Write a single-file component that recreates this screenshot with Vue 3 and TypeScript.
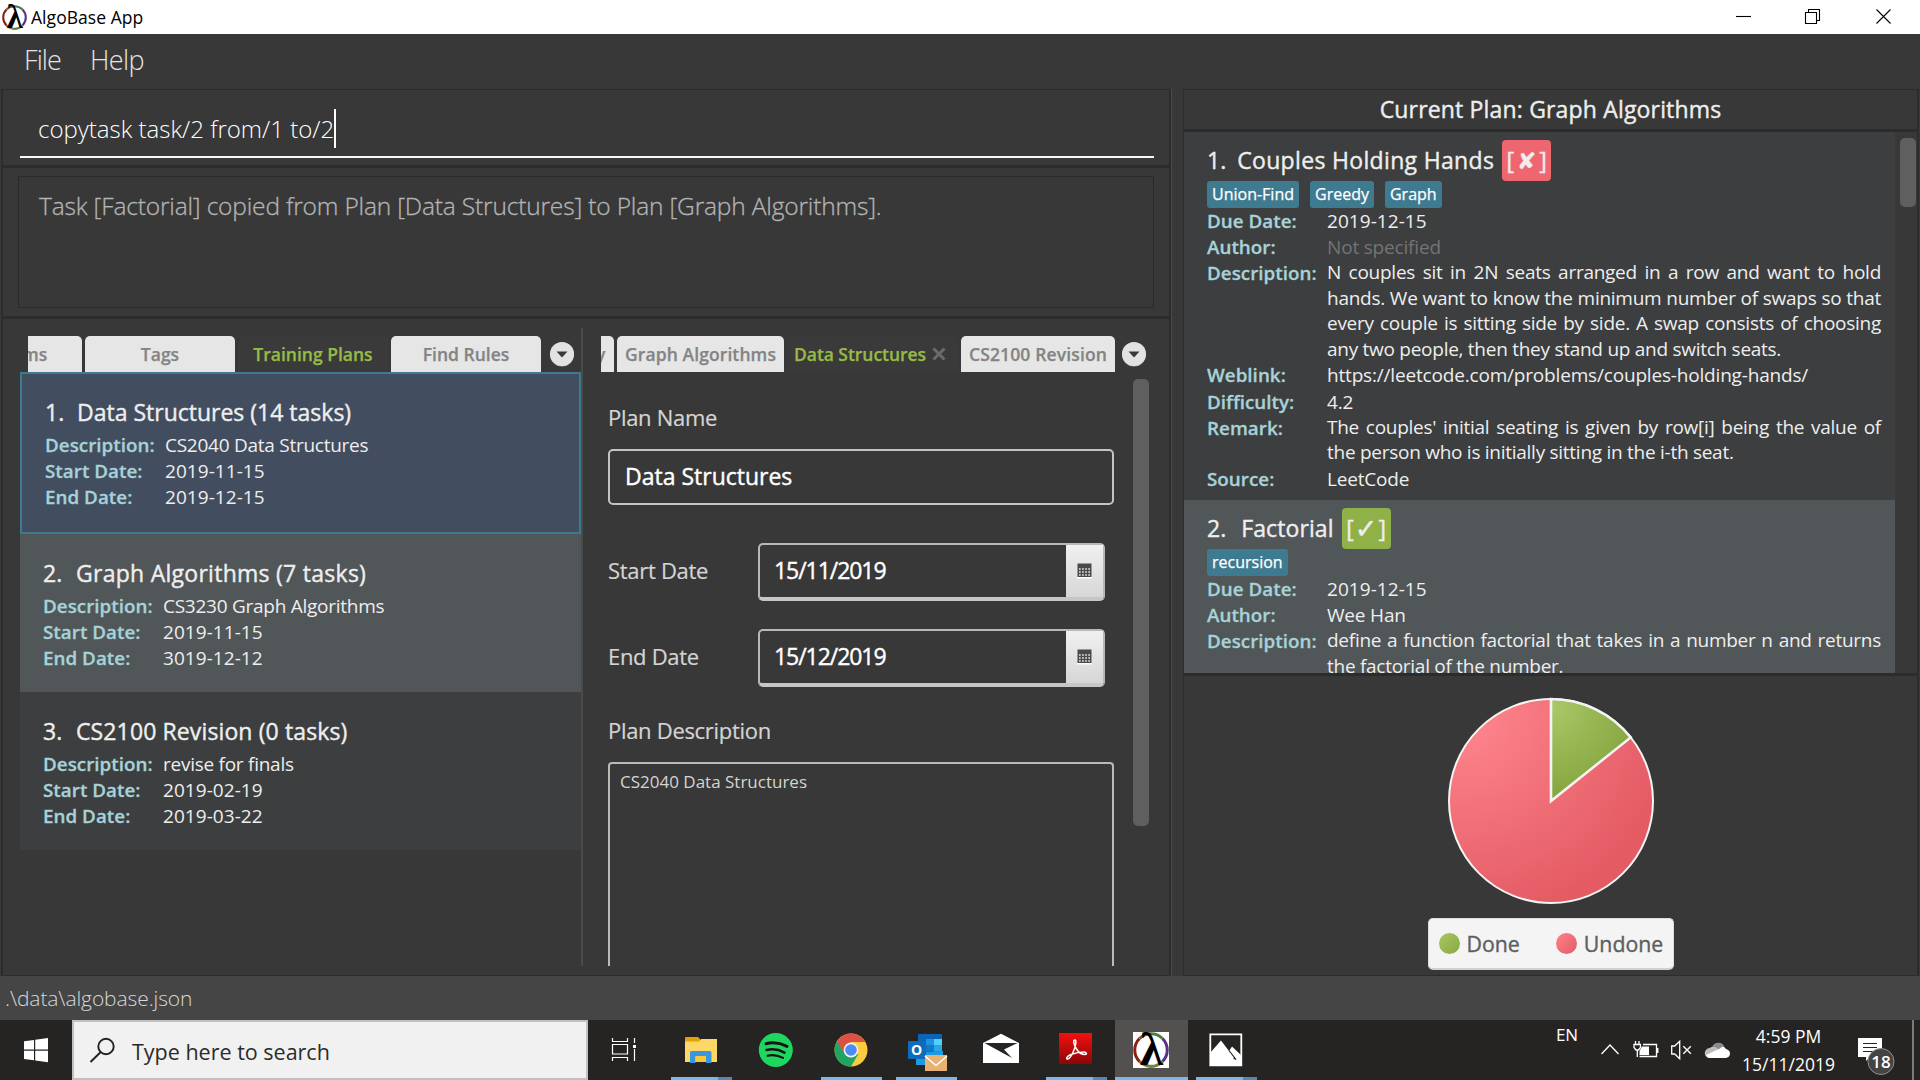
<script setup lang="ts">
interface Plan { index: number; title: string; tracking: number; description: string; start: string; end: string; selected?: boolean }
interface Field { label: string; value: string; kind?: 'muted' | 'block' | 'date' }
interface Task { index: number; title: string; tracking: number; gap: number; done: boolean; tags: string[]; fields: Field[] }

const plans: Plan[] = [
  { index: 1, title: 'Data Structures (14 tasks)', tracking: 0, description: 'CS2040 Data Structures', start: '2019-11-15', end: '2019-12-15', selected: true },
  { index: 2, title: 'Graph Algorithms (7 tasks)', tracking: 0.27, description: 'CS3230 Graph Algorithms', start: '2019-11-15', end: '3019-12-12' },
  { index: 3, title: 'CS2100 Revision (0 tasks)', tracking: 0.12, description: 'revise for finals', start: '2019-02-19', end: '2019-03-22' },
]

const tasks: Task[] = [
  {
    index: 1, title: 'Couples Holding Hands', tracking: 0.33, gap: 11, done: false, tags: ['Union-Find', 'Greedy', 'Graph'],
    fields: [
      { label: 'Due Date:', value: '2019-12-15', kind: 'date' },
      { label: 'Author:', value: 'Not specified', kind: 'muted' },
      { label: 'Description:', value: 'N couples sit in 2N seats arranged in a row and want to hold hands. We want to know the minimum number of swaps so that every couple is sitting side by side. A swap consists of choosing any two people, then they stand up and switch seats.', kind: 'block' },
      { label: 'Weblink:', value: 'https://leetcode.com/problems/couples-holding-hands/' },
      { label: 'Difficulty:', value: '4.2' },
      { label: 'Remark:', value: "The couples' initial seating is given by row[i] being the value of the person who is initially sitting in the i-th seat.", kind: 'block' },
      { label: 'Source:', value: 'LeetCode' },
    ],
  },
  {
    index: 2, title: 'Factorial', tracking: 0.1, gap: 15, done: true, tags: ['recursion'],
    fields: [
      { label: 'Due Date:', value: '2019-12-15', kind: 'date' },
      { label: 'Author:', value: 'Wee Han' },
      { label: 'Description:', value: 'define a function factorial that takes in a number n and returns the factorial of the number.', kind: 'block' },
    ],
  },
]
</script>

<template>
  <div class="screen">
    <svg class="defs" width="0" height="0">
      <symbol id="logo" viewBox="0 0 36 36" overflow="visible">
        <circle cx="18" cy="18" r="16.2" fill="#fff" />
        <g fill="none" stroke-width="3">
          <path d="M6.5 6.5A16.3 16.3 0 0 0 6.5 29.5" stroke="#8b2014" />
          <path d="M29.5 6.5A16.3 16.3 0 0 1 29.5 29.5" stroke="#573382" />
          <path d="M6.5 6.5A16.3 16.3 0 0 1 18 1.8" stroke="#6d5a3c" />
          <path d="M18 1.8A16.3 16.3 0 0 1 29.5 6.5" stroke="#527a45" />
          <path d="M6.5 29.5A16.3 16.3 0 0 0 14 33.8" stroke="#8a5d28" />
          <path d="M14 33.8A16.3 16.3 0 0 0 29.5 29.5" stroke="#64893a" />
        </g>
        <text class="lambda" x="18.5" y="33" text-anchor="middle">λ</text>
      </symbol>
    </svg>

    <header class="titlebar">
      <svg class="title-logo" width="25" height="25"><use href="#logo" /></svg>
      <span class="title-text">AlgoBase App</span>
      <svg class="win-buttons" width="180" height="34" viewBox="1730 0 180 34" fill="none" stroke="#000" stroke-width="1.1">
        <path d="M1736 16.5h15" />
        <path d="M1805.5 12.5h11v11h-11zM1808.5 12v-2.5h11v11h-2.500" />
        <path d="M1876.500 9.500l14 14M1890.500 9.500l-14 14" />
      </svg>
    </header>

    <nav class="menubar"><span class="m-file">File</span><span class="m-help">Help</span></nav>

    <main class="main">
      <section class="left">
        <div class="command">
          <div class="command-input"><span>copytask task/2 from/1 to/2</span><i class="caret"></i></div>
        </div>
        <div class="result">
          <div class="result-box">Task [Factorial] copied from Plan [Data Structures] to Plan [Graph Algorithms].</div>
        </div>
        <div class="workspace">
          <div class="list-col">
            <div class="tabs list-tabs">
              <div class="tab cut cut-ms"><span>ms</span></div>
              <div class="tab wide">Tags</div>
              <div class="tab wide active">Training Plans</div>
              <div class="tab wide find">Find Rules</div>
              <svg class="drop" width="26" height="26" viewBox="0 0 26 26"><circle cx="13" cy="13.500" r="12" fill="#a8a8a8" /><circle cx="13" cy="13" r="12" fill="#e2e2e2" /><path d="M7.500 10.500h11l-5.500 6z" fill="#383838" /></svg>
            </div>
            <article v-for="p in plans" :key="p.index" class="plan" :class="{ selected: p.selected, even: p.index === 2 }">
              <h3><span class="num">{{ p.index }}.</span><span :style="{ letterSpacing: p.tracking + 'px' }">{{ p.title }}</span></h3>
              <div class="prow"><b>Description:</b><span>{{ p.description }}</span></div>
              <div class="prow"><b>Start Date:</b><span class="date">{{ p.start }}</span></div>
              <div class="prow"><b>End Date:</b><span class="date">{{ p.end }}</span></div>
            </article>
          </div>

          <div class="detail-col">
            <div class="tabs detail-tabs">
              <div class="tab cut cut-y"><span>y</span></div>
              <div class="tab t-graph">Graph Algorithms</div>
              <div class="tab active t-data">Data Structures
                <svg width="14" height="14" viewBox="0 0 14 14"><path d="M1.500 1.500l11 11M12.500 1.500l-11 11" stroke="#6b6b6b" stroke-width="3" /></svg>
              </div>
              <div class="tab t-rev">CS2100 Revision</div>
              <svg class="drop" width="26" height="26" viewBox="0 0 26 26"><circle cx="13" cy="13.500" r="12" fill="#a8a8a8" /><circle cx="13" cy="13" r="12" fill="#e2e2e2" /><path d="M7.500 10.500h11l-5.500 6z" fill="#383838" /></svg>
            </div>
            <div class="detail-body">
              <form class="form">
                <label class="lbl">Plan Name</label>
                <div class="field">Data Structures</div>
                <div class="date-row">
                  <label class="lbl">Start Date</label>
                  <div class="datebox">
                    <span>15/11/2019</span>
                    <i class="cal"><svg width="15" height="16" viewBox="0 0 15 16"><path d="M0 14h15v1.500H0z" fill="#fff" /><path d="M.5.5h14v13.500H.5z" fill="#4a4a4a" /><path d="M2 6h11M2 9h11M2 12h11" stroke="#e8e8e8" stroke-width="1.400" stroke-dasharray="1.700 1.400" /></svg></i>
                  </div>
                </div>
                <div class="date-row second">
                  <label class="lbl">End Date</label>
                  <div class="datebox">
                    <span>15/12/2019</span>
                    <i class="cal"><svg width="15" height="16" viewBox="0 0 15 16"><path d="M0 14h15v1.500H0z" fill="#fff" /><path d="M.5.5h14v13.500H.5z" fill="#4a4a4a" /><path d="M2 6h11M2 9h11M2 12h11" stroke="#e8e8e8" stroke-width="1.400" stroke-dasharray="1.700 1.400" /></svg></i>
                  </div>
                </div>
                <label class="lbl desc-lbl">Plan Description</label>
                <div class="area">CS2040 Data Structures</div>
              </form>
              <div class="scroll-thumb"></div>
            </div>
          </div>
        </div>
      </section>

      <section class="right">
        <h2 class="current">Current Plan: Graph Algorithms</h2>
        <div class="tasks">
          <div class="task-list">
            <article v-for="t in tasks" :key="t.index" class="task" :class="{ even: t.index === 2 }">
              <h3><span :style="{ marginRight: t.gap + 'px' }">{{ t.index }}.</span><span :style="{ letterSpacing: t.tracking + 'px' }">{{ t.title }}</span><span class="badge" :class="t.done ? 'done' : 'undone'">[<i>{{ t.done ? '✓' : '✘' }}</i>]</span></h3>
              <div class="tags"><span v-for="g in t.tags" :key="g">{{ g }}</span></div>
              <div v-for="f in t.fields" :key="f.label" class="trow" :class="f.kind"><b>{{ f.label }}</b><span>{{ f.value }}</span></div>
            </article>
          </div>
          <div class="task-scroll"><div class="task-thumb"></div></div>
        </div>
        <div class="chart">
          <svg class="pie" width="208" height="208" viewBox="-104 -104 208 208">
            <defs>
              <radialGradient id="pr" gradientUnits="userSpaceOnUse" cx="-85" cy="-85" r="205"><stop offset="0" stop-color="#ff868e" /><stop offset="1" stop-color="#e45b64" /></radialGradient>
              <radialGradient id="pg" gradientUnits="userSpaceOnUse" cx="0" cy="-95" r="85"><stop offset="0" stop-color="#aac868" /><stop offset="1" stop-color="#87a841" /></radialGradient>
            </defs>
            <circle r="102" fill="url(#pr)" stroke="#f4f4f4" stroke-width="2" />
            <path d="M0 0V-102A102 102 0 0 1 79.700 -63.600Z" fill="url(#pg)" stroke="#f4f4f4" stroke-width="2.600" stroke-linejoin="miter" />
          </svg>
          <div class="legend"><i class="dot g"></i><span>Done</span><i class="dot r"></i><span>Undone</span></div>
        </div>
      </section>
    </main>

    <footer class="status">.\data\algobase.json</footer>

    <div class="taskbar">
      <svg class="start" width="72" height="60" viewBox="0 1020 72 60" fill="#fff"><path d="M24 1041.300l10-1.400v9.600H24zM35.200 1039.700l12.800-1.800v11.600H35.200zM24 1050.700h10v9.600l-10-1.400zM35.200 1050.700H48v11.600l-12.800-1.800z" /></svg>
      <div class="search">
        <svg width="28" height="28" viewBox="88 1036 28 28" fill="none" stroke="#222" stroke-width="1.900"><circle cx="106" cy="1046.500" r="7.700" /><path d="M100.500 1052.200L90.500 1062" /></svg>
        <span>Type here to search</span>
      </div>
      <svg class="task-view" width="76" height="60" viewBox="588 1020 76 60" fill="none" stroke="#fff" stroke-width="1.200"><path d="M612.500 1038v3.500h15V1038M612.500 1044.500h15v9.500h-15zM612.500 1061v-3.500h15v3.500M634.500 1038v5M634.500 1049v12" /><path d="M633 1045h3v3h-3z" fill="#fff" stroke="none" /></svg>
      <svg class="app" width="75" height="60" viewBox="664 1020 75 60">
        <path d="M685 1038q0-1 1-1h12l2 2v4h-15z" fill="#e2a105" /><path d="M685 1041.500h14l2-2.500h16v23h-32z" fill="#ffd766" /><path d="M690 1063v-10.500q0-1.500 1.500-1.500h18.500q1.500 0 1.500 1.500V1063h-5.500v-7h-10.500v7z" fill="#3b97dd" /><path d="M695.500 1056h10.500v6h-10.500z" fill="#fbc63a" />
        <path d="M671 1077h47v3h-47z" fill="#76b9ed" /><path d="M718 1077h14v3h-14z" fill="#5988ae" />
      </svg>
      <svg class="app" width="75" height="60" viewBox="739 1020 75 60"><circle cx="775.800" cy="1050" r="17" fill="#1ed760" /><g fill="none" stroke="#191414" stroke-linecap="round"><path d="M766 1043.800q10.500-2.800 21 2.600" stroke-width="3" /><path d="M766.500 1050q9.500-2.200 18 2.600" stroke-width="2.500" /><path d="M767.500 1055.700q8-1.800 15.500 2.200" stroke-width="2.100" /></g></svg>
      <svg class="app" width="75" height="60" viewBox="814 1020 75 60">
        <circle cx="851" cy="1050" r="16.500" fill="#fdcb3f" /><path d="M851 1050L836.700 1041.800A16.500 16.500 0 0 0 851 1066.500L858.200 1054.200z" fill="#1fa463" /><path d="M851 1042h14.400A16.500 16.500 0 0 0 837 1041.300L843.800 1053z" fill="#dd5144" />
        <circle cx="851" cy="1050" r="7.400" fill="#f1f1f1" /><circle cx="851" cy="1050" r="5.800" fill="#4c8bf5" /><path d="M821 1077h61v3h-61z" fill="#76b9ed" />
      </svg>
      <svg class="app" width="75" height="60" viewBox="889 1020 75 60">
        <path d="M918 1035q0-1 1-1h22q1 0 1 1v29h-24z" fill="#0a64b8" /><path d="M926 1039h8v6.500h-8z" fill="#1f93e0" /><path d="M934 1039h8v6.500h-8z" fill="#50d0fa" /><path d="M926 1045.500h8v6h-8z" fill="#1278c8" /><path d="M934 1045.500h8v6h-8z" fill="#28a8ea" /><path d="M916 1053l27-2v14h-27z" fill="#1c9be2" /><path d="M908 1042q0-1 1-1h16q1 0 1 1v16q0 1-1 1h-16q-1 0-1-1z" fill="#0f6cbd" />
        <text class="o" x="916.500" y="1055.300" text-anchor="middle">O</text>
        <path d="M925 1055h22v16h-22z" fill="#e8b273" /><path d="M925 1056l11 9.500 11-9.500" fill="none" stroke="#fff" stroke-width="1.600" /><path d="M896 1077h61v3h-61z" fill="#76b9ed" />
      </svg>
      <svg class="app" width="75" height="60" viewBox="964 1020 75 60"><path d="M983 1043l18-9.300 18 9.300v20h-36z" fill="#fff" /><path d="M984.500 1043h33l-13.500 6.500 8 8.500z" fill="#252423" /></svg>
      <svg class="app" width="75" height="60" viewBox="1039 1020 75 60">
        <defs><linearGradient id="ac" x1="0" y1="0" x2="0" y2="1"><stop offset="0" stop-color="#f50f0f" /><stop offset="1" stop-color="#8c0606" /></linearGradient></defs>
        <path d="M1059 1033h33v31h-33z" fill="url(#ac)" /><path d="M1075 1040c-2.500 0-1 5 1.500 9s6 5.500 8.500 5.500 1.500-2.500-1-2.500c-4 0-9 1-13 2.500s-5 4-4 4.500c2 .5 5-4 7-9s2.500-10 1-10z" fill="none" stroke="#fff" stroke-width="1.500" />
        <path d="M1046 1077h47v3h-47z" fill="#76b9ed" /><path d="M1093 1077h14v3h-14z" fill="#5988ae" />
      </svg>
      <svg class="app" width="75" height="60" viewBox="1114 1020 75 60"><path d="M1115 1020h73v60h-73z" fill="#525150" /><path d="M1133 1032h36v36h-36z" fill="#fff" /><use href="#logo" x="1133" y="1032" width="36" height="36" /><path d="M1115 1077h73v3h-73z" fill="#76b9ed" /></svg>
      <svg class="app" width="75" height="60" viewBox="1189 1020 75 60"><path d="M1210.300 1034.300h31v31h-31z" fill="none" stroke="#fff" stroke-width="1.800" /><path d="M1210 1066v-13l11-12.500 8 10.500 3-4.500 9.500 9v10.500z" fill="#fff" /><path d="M1229 1050.500l7 9-2.500-1.500" fill="none" stroke="#252423" stroke-width="1.200" /><path d="M1196 1077h47v3h-47z" fill="#76b9ed" /><path d="M1243 1077h14v3h-14z" fill="#5988ae" /></svg>
      <span class="lang">EN</span>
      <svg class="tray" width="140" height="60" viewBox="1593 1020 140 60" fill="none" stroke="#fff" stroke-width="1.300">
        <path d="M1601.500 1054l8.500-9 8.500 9" />
        <path d="M1643 1044.500h13.500v12h-17M1657.800 1048v5" /><path d="M1642 1046.500h7v8.500h-9.500v-4z" fill="#fff" stroke="none" /><path d="M1635.500 1041v3M1639 1041v3M1634 1044.500h6.500v3l-2 2.500h-2.500l-2-2.500zM1637.300 1050v7" />
        <path d="M1671.700 1046h3l5-4.800v17.600l-5-4.800h-3zM1683.300 1046.300l7.500 7.500M1690.800 1046.300l-7.500 7.500" />
        <g stroke="none"><path d="M1712 1048a6.500 6.500 0 0 1 12.500-1l-6 6z" fill="#8b8b8b" /><path d="M1710 1058a5 5 0 0 1-.5-10q5-3 8.500 1l5 9z" fill="#bdbdbd" /><path d="M1710 1058q-3 0-4-3l14-6.500q3-3.500 6 .5 4 1 4 4.500t-4 4.500z" fill="#fff" /></g>
      </svg>
      <div class="clock"><span class="time">4:59 PM</span><span>15/11/2019</span></div>
      <svg class="notify" width="60" height="60" viewBox="1845 1020 60 60">
        <path d="M1858 1038h24v19h-12l-4 4v-4h-8z" fill="#fff" /><path d="M1863 1043.500h14M1863 1047.500h14M1863 1051.500h14" stroke="#252423" stroke-width="1.200" /><circle cx="1881" cy="1061.500" r="13" fill="#454443" stroke="#8f8f8f" />
        <text class="count" x="1881" y="1067.500" text-anchor="middle">18</text>
      </svg>
      <i class="show-desktop"></i>
    </div>
  </div>
</template>

<style>
body { background: #383838; overflow: hidden; }
</style>

<style scoped>
* { box-sizing: border-box; }
.screen { width: 1920px; height: 1080px; display: flex; flex-direction: column; background: #383838; font-family: "Open Sans", "DejaVu Sans", sans-serif; overflow: hidden; white-space: nowrap; }
svg { display: block; flex: none; }
.defs { position: absolute; }
h2, h3 { margin: 0; font-weight: 400; -webkit-text-stroke: 0.4px currentColor; }
i { font-style: normal; }
.lambda { font: bold 47px "Liberation Serif", serif; fill: #000; }

.titlebar { height: 34px; flex: none; background: #fff; display: flex; align-items: center; padding-left: 2px; }
.title-logo { overflow: visible; }
.title-text { margin-left: 4px; font-size: 17.5px; color: #000; flex: 1; letter-spacing: 0.05px; }
.win-buttons { margin-right: 10px; }

.menubar { height: 55px; flex: none; padding-left: 24px; line-height: 51px; font-size: 27px; font-weight: 300; color: #e4e4e4; display: flex; }
.m-file { width: 66px; letter-spacing: -0.9px; }
.m-help { letter-spacing: -0.6px; }

.main { height: 887px; flex: none; display: flex; padding-left: 1px; }
.left { width: 1170px; height: 887px; border: 2px solid #2c2c2c; border-width: 1px 2px 1px 2px; box-shadow: 1px 0 0 #4a4a4a; display: flex; flex-direction: column; }
.command { height: 78px; flex: none; padding: 11px 15px 0 17px; border-bottom: 3px solid #2c2c2c; }
.command-input { height: 57px; border-bottom: 2px solid #f8f8f8; padding-left: 18px; font-size: 24px; font-weight: 300; color: #fff; display: flex; align-items: center; }
.caret { width: 2px; height: 39px; background: #fff; }
.result { height: 151px; flex: none; padding: 8px 15px 0 15px; border-bottom: 3px solid #2c2c2c; }
.result-box { height: 132px; border: 1.500px solid #2a2a2a; padding: 11px 20px; font-size: 24.5px; line-height: 36px; font-weight: 300; letter-spacing: -0.17px; color: #b4b4b4; -webkit-text-stroke: 0.3px currentColor; }
.workspace { flex: 1; min-height: 0; display: flex; padding: 9px 0 9px 17px; }
.list-col { width: 563px; border-right: 2px solid #4a4a4a; padding-top: 8px; }
.detail-col { flex: 1; padding-top: 8px; min-width: 0; display: flex; flex-direction: column; }

.tabs { display: flex; height: 36px; flex: none; }
.tab { background: #e6e6e6; color: #848484; font-size: 17.5px; font-weight: 600; -webkit-text-stroke: 0.25px currentColor; border-radius: 5px 5px 0 0; display: flex; align-items: center; justify-content: center; margin-right: 3px; height: 36px; overflow: hidden; }
.tab.wide { width: 150px; }
.tab.active { background: #3a3a3a; color: #96bb46; }
.tab.cut { border-top-left-radius: 0; justify-content: flex-start; }
.list-tabs { padding-left: 8px; }
.cut-ms { width: 54px; }
.cut-ms span { margin-left: -6px; }
.drop { align-self: center; margin-left: 5px; }
.detail-tabs { padding-left: 18px; }
.cut-y { width: 13px; }
.cut-y span { margin-left: -5px; }
.t-graph { width: 167px; letter-spacing: 0.100px; }
.t-data { width: 171px; gap: 6px; letter-spacing: -0.050px; padding-right: 5px; }
.t-rev { width: 154px; letter-spacing: 0.15px; }
.detail-tabs .drop { margin-left: 3px; }

.plan { height: 158px; background: #3c3e3f; padding: 23px 22px 0 23px; color: #eee; }
.plan.even { background: #515658; }
.plan.selected { height: 162px; background: #424d5f; border: 2px solid #3e7b91; padding-top: 22px; }
.plan h3 { font-size: 23px; line-height: 32px; margin-bottom: 4px; display: flex; }
.num { width: 33px; flex: none; }
.selected .num { width: 32px; }
.prow { display: flex; height: 26px; line-height: 26px; font-size: 19px; letter-spacing: -0.260px; }
.prow b { width: 120px; font-weight: 600; font-size: 18.800px; letter-spacing: 0.03px; color: #a6d2d8; -webkit-text-stroke: 0.3px currentColor; }
.prow .date { letter-spacing: 0.050px; }

.detail-body { flex: 1; min-height: 0; display: flex; padding-left: 25px; }
.form { width: 506px; display: flex; flex-direction: column; padding-top: 31px; }
.lbl { font-size: 22px; line-height: 28px; letter-spacing: -0.300px; color: #d4d4d4; -webkit-text-stroke: 0.2px currentColor; }
.field { margin-top: 18px; height: 56px; flex: none; border: 2px solid #c4c4c4; border-radius: 5px; padding: 0 15px 3px; font-size: 23px; color: #fff; display: flex; align-items: center; -webkit-text-stroke: 0.4px currentColor; }
.date-row { margin-top: 38px; height: 58px; flex: none; display: flex; align-items: center; }
.date-row.second { margin-top: 28px; }
.date-row .lbl { width: 150px; padding-bottom: 5px; }
.datebox { width: 347px; height: 58px; border: 2px solid #b8b8b8; border-bottom: 4px solid #c6c6c6; border-radius: 5px; display: flex; }
.datebox span { flex: 1; padding-left: 14px; font-size: 23px; line-height: 51px; color: #fff; letter-spacing: -1.050px; -webkit-text-stroke: 0.4px currentColor; }
.cal { width: 37px; background: linear-gradient(#f0f0f0, #d6d6d6); display: flex; align-items: center; justify-content: center; }
.desc-lbl { margin-top: 29px; flex: none; }
.area { margin-top: 18px; flex: 1; border: 2px solid #bababa; border-bottom: 0; border-radius: 4px 4px 0 0; padding: 6px 10px; font-size: 17px; line-height: 24px; color: #d4d4d4; }
.scroll-thumb { width: 16px; height: 447px; margin: 7px 0 0 19px; border-radius: 5px; background: #5f5f5f; }

.right { width: 736px; height: 887px; margin-left: 12px; border: 1px solid #2c2c2c; border-width: 1px 2px 1px 1px; display: flex; flex-direction: column; }
.current { height: 42px; flex: none; text-align: center; font-size: 23px; line-height: 38px; letter-spacing: 0.170px; color: #eee; border-bottom: 3px solid #2c2c2c; }
.tasks { height: 544px; flex: none; display: flex; border-bottom: 3px solid #2b2d2c; }
.task-list { width: 711px; overflow: hidden; }
.task-scroll { flex: 1; padding: 6px 0 0 5px; }
.task-thumb { width: 16px; height: 69px; background: #5f5f5f; border-radius: 5px; }
.task { height: 368px; background: #3c3e3f; padding: 8px 14px 0 23px; color: #eee; }
.task.even { background: #515658; }
.task h3 { display: flex; height: 41px; font-size: 23px; line-height: 41px; }
.badge { margin-left: 8px; width: 49px; height: 41px; line-height: 40px; border-radius: 4px; display: flex; justify-content: center; font-size: 23px; }
.badge i { margin: 0 3px; }
.undone { background: #ee6670; }
.done { background: #90b048; }
.done i { font-size: 27px; margin: 0 1px; }
.tags { display: flex; height: 27px; gap: 11px; }
.tags span { background: #3e7b91; border-radius: 3px; padding: 0 5px; font-size: 16px; line-height: 26px; color: #fff; -webkit-text-stroke: 0.25px currentColor; }
.trow { display: flex; min-height: 26.200px; line-height: 26px; font-size: 19px; letter-spacing: -0.180px; }
.trow b { width: 120px; flex: none; font-weight: 600; font-size: 18.800px; letter-spacing: 0.03px; color: #a6d2d8; -webkit-text-stroke: 0.3px currentColor; }
.trow span { flex: 1; }
.block span { white-space: normal; text-align: justify; line-height: 25.500px; letter-spacing: -0.270px; }
.date span { letter-spacing: 0.050px; }
.muted span { color: #747474; }

.chart { flex: 1; display: flex; flex-direction: column; align-items: center; padding: 21px 0 0 0; }
.legend { margin-top: 13px; width: 246px; height: 52px; background: #f4f4f4; border: 1px solid #ddd; border-bottom: 2px solid #d0d0d0; border-radius: 5px; display: flex; align-items: center; padding-left: 10px; font-size: 21.300px; color: #5f5f5f; -webkit-text-stroke: 0.4px currentColor; }
.legend span { margin-left: 7px; }
.dot { width: 21px; height: 21px; border-radius: 50%; }
.dot.g { background: linear-gradient(135deg, #a9c766, #87a841); }
.dot.r { background: linear-gradient(135deg, #fe828a, #e45b64); margin-left: 36px; }

.status { height: 44px; flex: none; background: #454545; padding-left: 5px; font-size: 21px; font-weight: 300; line-height: 45px; letter-spacing: -0.100px; color: #d8d8d8; }

.taskbar { height: 60px; flex: none; background: #252423; display: flex; color: #fff; }
.search { width: 516px; height: 60px; background: #f1f1f1; border: 2px solid #c1c1c1; display: flex; align-items: center; padding-left: 14px; }
.search span { margin-left: 16px; padding-top: 2px; font-size: 21.500px; color: #2b2b2b; }
.o { font: bold 14px "Open Sans", sans-serif; fill: #fff; }
.lang { margin-left: 292px; width: 37px; font-size: 17px; line-height: 30px; letter-spacing: -0.300px; }
.clock { width: 111px; display: flex; flex-direction: column; align-items: center; font-size: 17.500px; }
.clock span { height: 28px; line-height: 28px; }
.clock .time { margin-top: 2px; }
.notify { margin-left: 1px; }
.count { font: 600 17px "Open Sans", sans-serif; fill: #fff; }
.show-desktop { width: 2px; height: 60px; background: #7a7a7a; margin-left: 7px; }
</style>
